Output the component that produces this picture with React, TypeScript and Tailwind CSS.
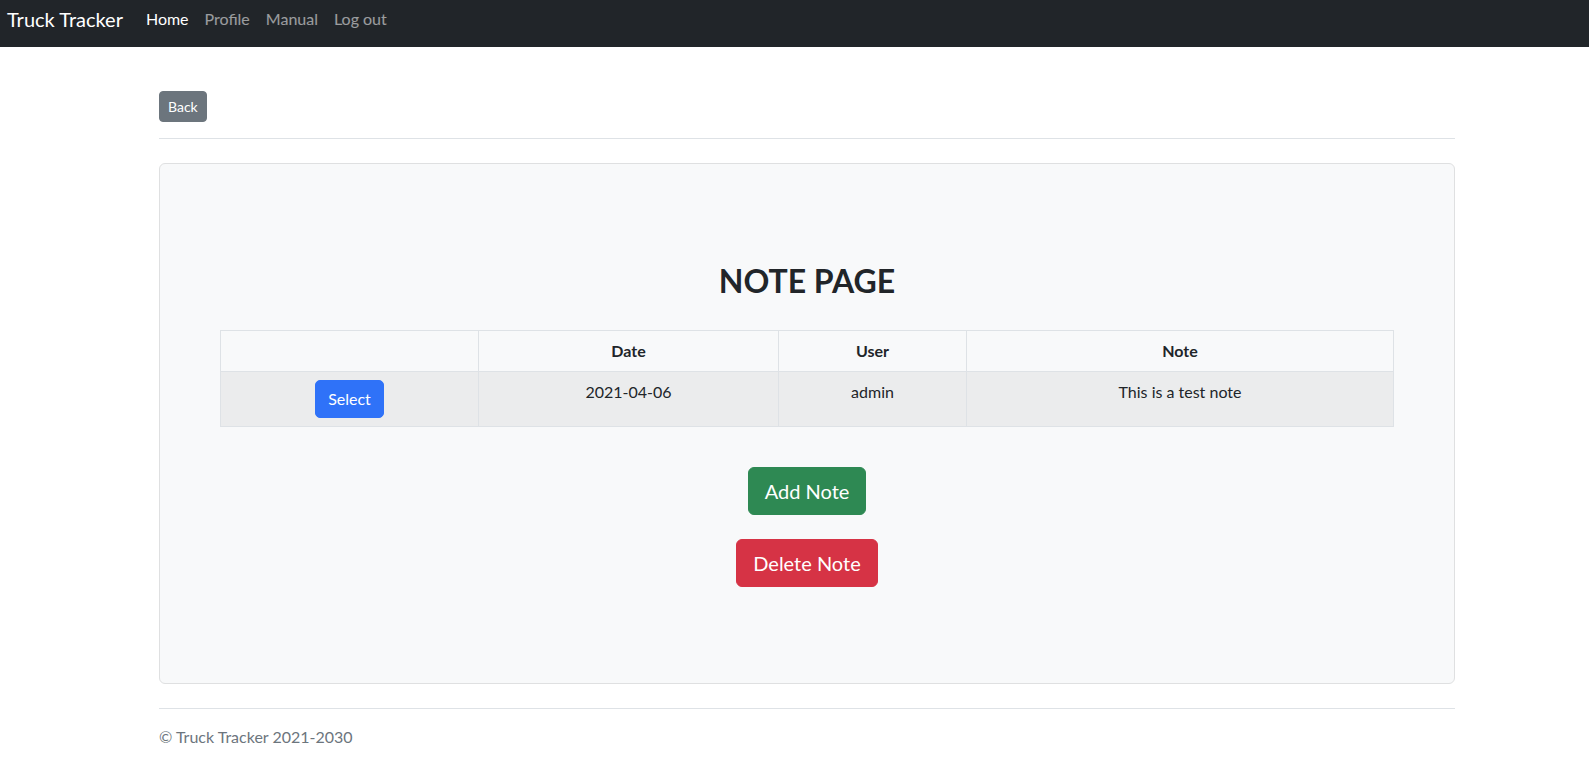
const navLinks = [
  { label: "Home", active: true },
  { label: "Profile", active: false },
  { label: "Manual", active: false },
  { label: "Log out", active: false },
]

const notes = [
  { date: "2021-04-06", user: "admin", note: "This is a test note" },
]

function Navbar() {
  return (
    <nav className="h-[47px] bg-[#212529] px-[7px] pt-[4px]">
      <div className="flex h-[30px] items-center">
        <a href="#" className="mr-[15px] text-[20px] leading-[30px] text-white">
          Truck Tracker
        </a>
        {navLinks.map(link => (
          <a
            key={link.label}
            href="#"
            className={
              link.active
                ? "px-2 text-base leading-6 text-white"
                : "px-2 text-base leading-6 text-white/55"
            }
          >
            {link.label}
          </a>
        ))}
      </div>
    </nav>
  )
}

function NoteTable() {
  return (
    <table className="w-full table-fixed border-collapse border border-[#dee2e6] text-center text-base leading-6">
      <colgroup>
        <col className="w-[258px]" />
        <col className="w-[300px]" />
        <col className="w-[188px]" />
        <col />
      </colgroup>
      <thead>
        <tr className="bg-[#f8f9fa]">
          <th className="border border-[#dee2e6] px-2 py-2 font-bold"></th>
          <th className="border border-[#dee2e6] px-2 py-2 font-bold">Date</th>
          <th className="border border-[#dee2e6] px-2 py-2 font-bold">User</th>
          <th className="border border-[#dee2e6] px-2 py-2 font-bold">Note</th>
        </tr>
      </thead>
      <tbody>
        {notes.map(n => (
          <tr key={n.date} className="bg-[#ebeced] align-top">
            <td className="border border-[#dee2e6] px-2 py-2">
              <button className="rounded-[5px] border border-[#2f72f8] bg-[#2f72f8] px-3 py-[6px] text-base leading-6 text-white">
                Select
              </button>
            </td>
            <td className="border border-[#dee2e6] px-2 py-2">{n.date}</td>
            <td className="border border-[#dee2e6] px-2 py-2">{n.user}</td>
            <td className="border border-[#dee2e6] px-2 py-2">{n.note}</td>
          </tr>
        ))}
      </tbody>
    </table>
  )
}

export default function App() {
  return (
    <div className="min-h-screen bg-white text-[#212529] font-['Lato','Noto_Sans',sans-serif]">
      <Navbar />
      <main className="ml-[159px] w-[1296px]">
        <div className="pt-[44px]">
          <button className="rounded border border-[#6c757d] bg-[#6c757d] px-2 py-1 text-sm leading-[21px] text-white">
            Back
          </button>
        </div>
        <hr className="mt-[16px] border-t border-[#dee2e6]" />
        <section className="mt-[24px] rounded-md border border-[#dfe0e1] bg-[#f8f9fa] px-[60px] pt-[98px] pb-[96px]">
          <h2 className="text-center text-[32px] font-bold leading-[38px]">NOTE PAGE</h2>
          <div className="mt-[30px]">
            <NoteTable />
          </div>
          <div className="mt-[40px] flex flex-col items-center gap-[24px]">
            <button className="rounded-md border border-[#2e8953] bg-[#2e8953] px-4 py-2 text-xl leading-[30px] text-white">
              Add Note
            </button>
            <button className="rounded-md border border-[#d63345] bg-[#d63345] px-4 py-2 text-xl leading-[30px] text-white">
              Delete Note
            </button>
          </div>
        </section>
        <hr className="mt-[24px] border-t border-[#dee2e6]" />
        <footer className="mt-[16px] text-base leading-6 text-[#6c757d]">© Truck Tracker 2021-2030</footer>
      </main>
    </div>
  )
}
